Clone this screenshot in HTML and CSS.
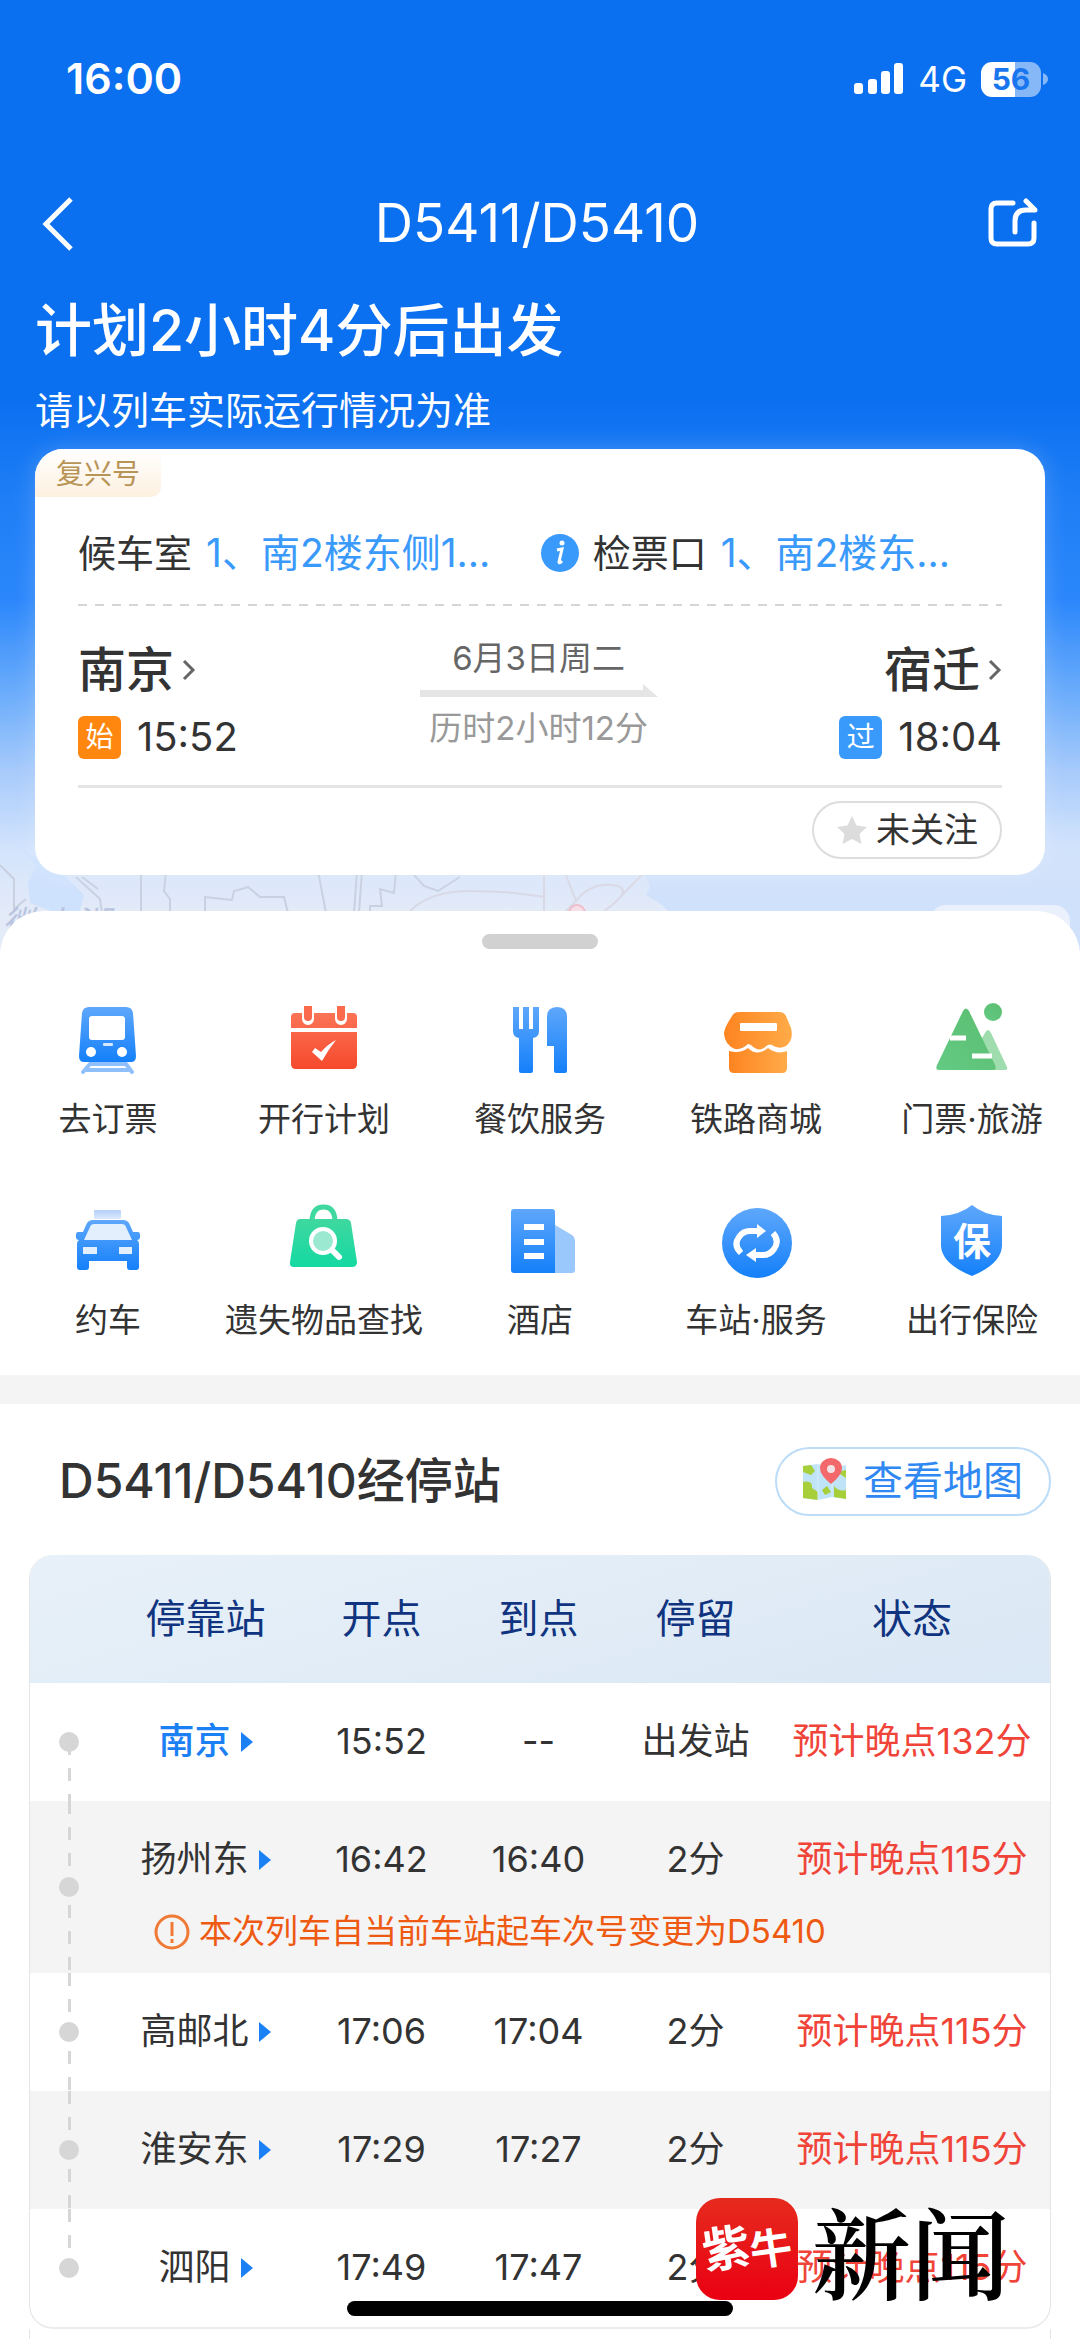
FILE: index.html
```html
<!DOCTYPE html>
<html lang="zh-CN">
<head>
    <meta charset="UTF-8">
    <meta name="viewport" content="width=device-width, initial-scale=1.0">
    <title>D5411/D5410</title>
    <link rel="stylesheet" href="styles.css">
</head>
<body>
    <div class="hero">
        <!-- map under the card -->
        <svg class="map" viewBox="0 0 1080 140" preserveAspectRatio="none" aria-hidden="true">
            <defs>
                <linearGradient id="sea" x2="0" y2="1"><stop stop-color="#cfe1fb" stop-opacity="0"/><stop offset="0.6" stop-color="#cfe1fb"/></linearGradient>
            </defs>
            <path d="M0 10L36 55 28 72 30 92 52 100H80L84 84 60 60 30 44Z" fill="#cfe2fd"/>
            <path d="M620 0L650 76 646 84 662 94 672 104V140H1080V0Z" fill="url(#sea)"/>
            <path d="M0 54L14 68V98L26 88M76 66L100 88 102 102M82 66L98 78M141 60V102M166 60L164 80 170 88V102M205 102V86L232 89 234 80 248 76 260 86H284L288 102M318 60L326 102M357 60L354 102M362 60L359 102M370 102V95H382L380 78 394 82 396 60M414 64L424 75 438 80 460 66" fill="none" stroke="#c9d0e0" stroke-width="2"/>
            <path d="M410 100Q430 80 470 80T545 86M544 60V102M566 64L576 90 562 104M576 90Q590 72 612 74T612 94L602 102M620 86L642 64" fill="none" stroke="#d9d9e6" stroke-width="2"/>
            <circle cx="577" cy="102" r="8" fill="#f6dfe8" stroke="#eebccb" stroke-width="2"/>
            <text x="2" y="126" class="maplabel">微山湖</text>
            <rect x="930" y="94" width="140" height="60" rx="16" fill="#eaf0fc"/>
        </svg>

        <div class="statusbar">
            <span class="clock">16:00</span>
            <div class="signals">
                <svg width="50" height="32" viewBox="0 0 50 32" fill="#fff"><rect y="20" width="9" height="11" rx="3"/><rect x="14" y="16" width="9" height="15" rx="3"/><rect x="27" y="8" width="9" height="23" rx="3"/><rect x="40" width="9" height="31" rx="3"/></svg>
                <span class="network">4G</span>
                <span class="battery">56</span>
                <svg class="tip" width="5" height="12" viewBox="0 0 5 12"><path d="M0 0Q5 2 5 6T0 12Z" fill="#86b8f8"/></svg>
            </div>
        </div>

        <div class="navbar">
            <button class="navbtn" aria-label="返回">
                <svg width="52" height="56" viewBox="0 0 52 56" fill="none" stroke="#fff" stroke-width="5"><path d="M36 3L11 28 36 53"/></svg>
            </button>
            <h1 class="navtitle">D5411/D5410</h1>
            <button class="navbtn" aria-label="分享">
                <svg width="52" height="52" viewBox="0 0 52 52" fill="none" stroke="#fff" stroke-width="5" stroke-linecap="round" stroke-linejoin="round"><path d="M26 5H10Q4 5 4 11V40Q4 46 10 46H41Q47 46 47 40V25"/><path d="M28 34V23Q28 12 39 12H48L39 3"/></svg>
            </button>
        </div>

        <div class="headline">计划2小时4分后出发</div>
        <div class="subline">请以列车实际运行情况为准</div>

        <div class="card">
            <span class="tag">复兴号</span>
            <div class="gates">
                <div class="gate">候车室 <span class="link">1、南2楼东侧1...</span></div>
                <div class="gate">
                    <svg width="38" height="38" viewBox="0 0 38 38"><circle cx="19" cy="19" r="19" fill="#3a9afc"/><path d="M16 16L21 15 18 28Q18 30 21 27" fill="none" stroke="#fff" stroke-width="3"/><circle cx="21" cy="9" r="2.5" fill="#fff"/></svg>
                    检票口 <span class="link">1、南2楼东...</span>
                </div>
            </div>
            <div class="dashes"></div>
            <div class="journey">
                <div class="end">
                    <div class="station">南京<svg width="14" height="22" viewBox="0 0 14 22"><path d="M2 2L11 11 2 20"/></svg></div>
                    <div class="time"><span class="badge">始</span>15:52</div>
                </div>
                <div class="middle">
                    <div class="date">6月3日周二</div>
                    <svg class="arrow" width="238" height="14" viewBox="0 0 238 14"><path d="M0 6H223V0L238 13H0Z" fill="#e5e5e5"/></svg>
                    <div class="duration">历时2小时12分</div>
                </div>
                <div class="end">
                    <div class="station">宿迁<svg width="14" height="22" viewBox="0 0 14 22"><path d="M2 2L11 11 2 20"/></svg></div>
                    <div class="time"><span class="badge pass">过</span>18:04</div>
                </div>
            </div>
            <div class="cardfoot">
                <button class="follow">
                    <svg width="32" height="30" viewBox="0 0 32 30"><path d="M16 1L20.500 10.500 31 12 23.500 19 25.500 29 16 24 6.500 29 8.500 19 1 12 11.500 10.500Z" fill="#dcdcdc"/></svg>
                    未关注
                </button>
            </div>
        </div>
    </div>

    <div class="sheet">
        <div class="handle"></div>
        <!-- gradients shared by the service icons -->
        <svg class="defs" width="0" height="0" aria-hidden="true">
            <defs>
                <linearGradient id="blue" x2="0" y2="1"><stop stop-color="#5ea7fb"/><stop offset="1" stop-color="#1480fa"/></linearGradient>
                <linearGradient id="pale" x2="0" y2="1"><stop stop-color="#b4cff8"/><stop offset="1" stop-color="#dbe9fd"/></linearGradient>
                <linearGradient id="red" x2="0" y2="1"><stop stop-color="#fb7455"/><stop offset="1" stop-color="#f6492d"/></linearGradient>
                <linearGradient id="orange"><stop stop-color="#fd8420"/><stop offset="1" stop-color="#ffab49"/></linearGradient>
                <linearGradient id="green" x1="1" x2="0" y2="1"><stop stop-color="#5bbd70"/><stop offset="1" stop-color="#63cb83"/></linearGradient>
                <linearGradient id="mint" x2="0" y2="1"><stop stop-color="#3fd89f"/><stop offset="1" stop-color="#14d9a2"/></linearGradient>
            </defs>
        </svg>
        <nav class="services">
            <a class="service" href="#">
                <svg viewBox="0 0 72 72"><path d="M18 61H54L60 69M18 61L11 69M14 67H57" fill="none" stroke="#8fc0fb" stroke-width="4" stroke-linecap="round"/><path d="M17 4H54Q60 4 61 10L64 53Q64 59 59 59H12Q7 59 7 53L10 10Q11 4 17 4Z" fill="url(#blue)"/><rect x="17" y="13" width="36" height="24" rx="3" fill="#fff"/><rect x="31" y="40" width="10" height="3" rx="1" fill="#d5e7fe"/><circle cx="19" cy="49" r="5" fill="#fff"/><circle cx="50" cy="49" r="5" fill="#fff"/></svg>
                去订票
            </a>
            <a class="service" href="#">
                <svg viewBox="0 0 72 72"><path d="M7 10H65Q69 10 69 14V25H3V14Q3 10 7 10ZM3 29H69V61Q69 66 64 66H8Q3 66 3 61Z" fill="url(#red)"/><path d="M20 3V16M53 3V16" stroke="#fff" stroke-width="12" stroke-linecap="round"/><path d="M16 3H24V14Q24 18 20 18T16 14ZM49 3H57V14Q57 18 53 18T49 14Z" fill="#fb6a4c"/><path d="M24 49L27 45 33 49Q40 41 48 37Q40 47 34 58Z" fill="#fff"/></svg>
                开行计划
            </a>
            <a class="service" href="#">
                <svg viewBox="0 0 72 72"><path d="M9 4H15V26H19V4H25V26H29V4H35V28Q35 34 29 35V68Q29 70 27 70H17Q15 70 15 68V35Q9 34 9 28ZM43 43V14Q43 4 53 4T63 14V68Q63 70 61 70H52Q50 70 50 68V43Z" fill="url(#blue)"/></svg>
                餐饮服务
            </a>
            <a class="service" href="#">
                <svg viewBox="0 0 72 72"><path d="M19 9H59Q64 9 66 13L71 25Q74 37 66 43Q59 47 52 42Q48 40 44 45Q38 49 31 42L28 41Q22 47 15 46Q5 42 4 31Q4 25 12 13Q14 9 19 9Z" fill="url(#orange)"/><path d="M9 48Q20 51 28 45Q37 54 48 45Q57 52 67 48V65Q67 70 62 70H14Q9 70 9 65Z" fill="url(#orange)"/><rect x="20" y="20" width="37" height="8" rx="1" fill="#fff"/></svg>
                铁路商城
            </a>
            <a class="service" href="#">
                <svg viewBox="0 0 72 72"><path d="M49 30Q52 24 55 30L71 64Q72 67 69 67H50L40 45Z" fill="#9fdcae"/><path d="M27 8Q30 3 33 8L59 62Q61 67 57 67H3Q-1 67 1 62Z" fill="url(#green)"/><circle cx="57" cy="9" r="9" fill="url(#green)"/><path d="M14 35H30M36 53H56" stroke="#fff" stroke-width="5"/></svg>
                门票·旅游
            </a>
            <a class="service" href="#">
                <svg viewBox="0 0 72 72"><rect x="22" y="6" width="27" height="9" rx="1" fill="url(#pale)"/><path d="M21 16H51Q56 16 58 21L61 28H66Q68 28 68 31V33Q68 36 65 36Q67 37 67 40V63Q67 66 64 66H58Q55 66 55 63V57H17V63Q17 66 14 66H8Q5 66 5 63V40Q5 37 7 36Q4 36 4 33V31Q4 28 6 28H11L14 21Q16 16 21 16Z" fill="url(#blue)"/><path d="M22 20H50Q53 20 54 23L60 36H12L18 23Q19 20 22 20ZM11 43H25V50H11ZM47 43H60V50H47Z" fill="#e3effd"/></svg>
                约车
            </a>
            <a class="service" href="#">
                <svg viewBox="0 0 72 72"><path d="M24 18Q24 3 35.500 3T47 18" fill="none" stroke="#3fd89f" stroke-width="5"/><path d="M12 15H58Q62 15 63 19L69 58Q69 63 64 63H6Q1 63 2 58L8 19Q9 15 12 15Z" fill="url(#mint)"/><circle cx="35" cy="37" r="12" fill="#9be9d1" stroke="#fff" stroke-width="4"/><path d="M45 47L51 53" stroke="#fff" stroke-width="6" stroke-linecap="round"/></svg>
                遗失物品查找
            </a>
            <a class="service" href="#">
                <svg viewBox="0 0 72 72"><path d="M51 21L68 31Q71 33 71 36V66Q71 69 68 69H51Z" fill="#9bc8fc"/><path d="M10 5H48Q51 5 51 8V69H10Q7 69 7 66V8Q7 5 10 5Z" fill="url(#blue)"/><path d="M20 23H40M20 38H40M20 52H40" stroke="#fff" stroke-width="6"/></svg>
                酒店
            </a>
            <a class="service" href="#">
                <svg viewBox="0 0 72 72"><circle cx="37" cy="39" r="35" fill="url(#blue)"/><path d="M21 49Q13 41 19 33Q23 27 30 27H38M53 29Q60 37 54 45Q50 51 43 51H34" fill="none" stroke="#fff" stroke-width="6"/><path d="M37 20L46 27 37 34ZM36 44L26 51 36 58Z" fill="#fff"/></svg>
                车站·服务
            </a>
            <a class="service" href="#">
                <svg viewBox="0 0 72 72"><path d="M36 1Q48 11 66 12V42Q65 60 36 72Q6 60 5 42V12Q24 11 36 1Z" fill="url(#blue)"/><text x="36" y="51" class="shieldtext">保</text></svg>
                出行保险
            </a>
        </nav>
    </div>

    <div class="stops">
        <div class="stopshead">
            <h2 class="stopstitle">D5411/D5410经停站</h2>
            <button class="mapbtn">
                <svg width="44" height="46" viewBox="0 0 44 46"><path d="M0 8L15 6 29 10 43 7V41L29 39 15 42 0 40Z" fill="#bfe3f7"/><path d="M0 8L8 7 12 13 8 17 0 14ZM0 24Q10 22 9 30L15 34V42L0 40ZM34 14L43 12V20ZM31 28Q36 34 43 32V41L31 39ZM19 32L24 28 28 34 22 37Z" fill="#a6cf3a"/><path d="M15 6V42M29 10V39" stroke="#d8eef9" stroke-width="1"/><path d="M28 26Q17 17 17 10A11 10 0 0 1 39 10Q39 17 28 26Z" fill="#f2686b"/><circle cx="28" cy="11" r="4" fill="#f3e3e6"/></svg>
                查看地图
            </button>
        </div>
        <div class="tablebox">
            <table class="stoptable">
                <colgroup><col class="ctrack"><col class="cname"><col class="ctime"><col class="ctime"><col class="ctime"><col></colgroup>
                <thead>
                    <tr><th></th><th>停靠站</th><th>开点</th><th>到点</th><th>停留</th><th>状态</th></tr>
                </thead>
                <tbody>
                    <tr>
                        <td class="track first"></td><td class="current"><a class="stop" href="#">南京</a></td><td>15:52</td><td>--</td><td>出发站</td><td class="late">预计晚点132分</td>
                    </tr>
                    <tr class="gray">
                        <td class="track" rowspan="2"></td><td><a class="stop" href="#">扬州东</a></td><td>16:42</td><td>16:40</td><td>2分</td><td class="late">预计晚点115分</td>
                    </tr>
                    <tr class="gray noterow">
                        <td colspan="5"><div class="note"><svg width="36" height="36" viewBox="0 0 36 36" fill="none" stroke="#f07a35" stroke-width="3"><circle cx="18" cy="18" r="16"/><path d="M18 8V22M18 25V29"/></svg>本次列车自当前车站起车次号变更为D5410</div></td>
                    </tr>
                    <tr>
                        <td class="track"></td><td><a class="stop" href="#">高邮北</a></td><td>17:06</td><td>17:04</td><td>2分</td><td class="late">预计晚点115分</td>
                    </tr>
                    <tr class="gray">
                        <td class="track"></td><td><a class="stop" href="#">淮安东</a></td><td>17:29</td><td>17:27</td><td>2分</td><td class="late">预计晚点115分</td>
                    </tr>
                    <tr>
                        <td class="track last"></td><td><a class="stop" href="#">泗阳</a></td><td>17:49</td><td>17:47</td><td>2分</td><td class="late">预计晚点115分</td>
                    </tr>
                </tbody>
            </table>
        </div>
        <div class="tablenext"></div>
    </div>

    <div class="homebar"></div>
    <div class="watermark">
        <div class="logo"><span class="zi">紫</span><span class="niu">牛</span></div>
        <span class="brand">新闻</span>
    </div>
</body>
</html>
```
FILE: styles.css
```css
* {
    box-sizing: border-box;
}
html {
    height: 100%;
    overflow: hidden;
}
body {
    margin: 0;
    position: relative;
    height: 100%;
    overflow: hidden;
    background-color: #fff;
    color: #333;
    font-family: Inter, "Noto Sans CJK SC", sans-serif;
    font-size: 36px;
    line-height: 1.2;
}
button {
    font: inherit;
    color: inherit;
    background: none;
    border: none;
    padding: 0;
}
a {
    color: inherit;
    text-decoration: none;
}
svg {
    flex: none;
    overflow: visible;
}

.hero {
    position: relative;
    padding: 0 35px 76px;
    color: #fff;
    background: linear-gradient(#0b70f0 0, #0b70f0 400px, #1f7ef6 500px, #2b87fb 600px, #69abfb 690px, #a6cafb 770px, #d3e4fc 850px, #e3eaf8 910px);
}
.map {
    position: absolute;
    left: 0;
    bottom: 0;
    width: 100%;
    height: 140px;
}
.maplabel {
    font-size: 36px;
    font-style: italic;
    fill: #b9c4e0;
}
.statusbar {
    position: relative;
    display: flex;
    justify-content: space-between;
    align-items: center;
    height: 158px;
    padding-left: 31px;
    margin-right: -3px;
}
.clock {
    font-size: 43px;
    font-weight: 600;
}
.signals {
    display: flex;
    align-items: center;
}
.network {
    font-size: 35px;
    margin: 0 14px;
}
.battery {
    width: 60px;
    height: 35px;
    border-radius: 11px;
    background: linear-gradient(90deg, #fff 56%, #86b8f8 56%);
    color: #1a76ee;
    font-size: 30px;
    font-weight: 700;
    line-height: 35px;
    text-align: center;
}
.tip {
    margin-left: 2px;
}
.navbar {
    position: relative;
    display: flex;
    justify-content: space-between;
    align-items: center;
    height: 132px;
    padding-right: 6px;
}
.navbtn {
    display: flex;
}
.navtitle {
    margin: 0;
    font-size: 53px;
    font-weight: 400;
}
.headline {
    position: relative;
    font-size: 57px;
    font-weight: 500;
    line-height: 82px;
}
.subline {
    position: relative;
    font-size: 38px;
    line-height: 77px;
}

.card {
    position: relative;
    padding: 0 43px 16px;
    border-radius: 28px;
    background-color: #fff;
    color: #333;
    box-shadow: 0 0 24px rgba(255, 255, 255, 0.2);
}
.tag {
    display: block;
    width: 126px;
    height: 48px;
    margin-left: -43px;
    padding-left: 21px;
    border-radius: 28px 0 10px 0;
    background: linear-gradient(#fff, #fdf0e0);
    color: #b89457;
    font-size: 28px;
    line-height: 50px;
}
.gates {
    display: flex;
    justify-content: space-between;
    margin-top: 28px;
    padding-right: 52px;
    font-size: 38px;
    line-height: 56px;
}
.gate {
    display: flex;
    align-items: center;
    gap: 14px;
    white-space: nowrap;
}
.link {
    color: #3a9afc;
    font-size: 39px;
}
.dashes {
    height: 2px;
    margin-top: 23px;
    background: repeating-linear-gradient(90deg, #d5d5d5 0, #d5d5d5 9px, #fff 9px, #fff 17px);
}
.journey {
    display: flex;
    justify-content: space-between;
    padding: 34px 0 11px;
    border-bottom: 3px solid #e5e5e5;
}
.station {
    display: flex;
    align-items: center;
    justify-content: space-between;
    width: 118px;
    font-size: 48px;
    font-weight: 500;
    line-height: 60px;
}
.station svg {
    fill: none;
    stroke: #666;
    stroke-width: 3;
}
.end:last-child .station {
    margin-left: auto;
}
.time {
    display: flex;
    align-items: center;
    gap: 16px;
    height: 74px;
    font-size: 40px;
}
.badge {
    width: 43px;
    height: 43px;
    border-radius: 6px;
    background-color: #ff870f;
    color: #fff;
    font-size: 28px;
    line-height: 43px;
    text-align: center;
}
.pass {
    background-color: #3a9afc;
}
.middle {
    margin-top: -4px;
    color: #999;
    font-size: 33px;
    line-height: 44px;
    text-align: center;
}
.date {
    color: #666;
}
.arrow {
    display: block;
    margin: 4px 0 8px;
}
.cardfoot {
    display: flex;
    justify-content: flex-end;
    padding-top: 13px;
}
.follow {
    display: flex;
    align-items: center;
    justify-content: center;
    gap: 8px;
    width: 190px;
    height: 58px;
    border: 2px solid #ddd;
    border-radius: 29px;
    font-size: 34px;
}

.sheet {
    position: relative;
    margin-top: -40px;
    padding: 23px 0 33px;
    border-radius: 44px 44px 0 0;
    background-color: #fff;
}
.defs {
    position: absolute;
}
.handle {
    width: 116px;
    height: 15px;
    margin: 0 auto 54px;
    border-radius: 8px;
    background-color: #d1d1d1;
}
.services {
    display: grid;
    grid-template-columns: repeat(5, 1fr);
    row-gap: 63px;
}
.service {
    display: flex;
    flex-direction: column;
    align-items: center;
    gap: 22px;
    font-size: 33px;
    line-height: 44px;
    white-space: nowrap;
}
.service svg {
    width: 72px;
    height: 72px;
}
.shieldtext {
    fill: #fff;
    font-size: 38px;
    font-weight: 700;
    text-anchor: middle;
}

.stops {
    padding: 0 29px;
    border-top: 29px solid #f4f4f4;
}
.stopshead {
    display: flex;
    justify-content: space-between;
    align-items: center;
    height: 151px;
    padding: 3px 0 0 30px;
}
.stopstitle {
    margin: 0;
    font-size: 48px;
    font-weight: 500;
}
.mapbtn {
    display: flex;
    align-items: center;
    justify-content: center;
    gap: 16px;
    width: 276px;
    height: 69px;
    border: 2px solid #bcdcf8;
    border-radius: 35px;
    color: #3089f2;
    font-size: 40px;
}
.tablebox {
    border: 1px solid #e5e5e5;
    border-top: none;
    border-bottom: 2px solid #ececec;
    border-radius: 24px;
    overflow: hidden;
}
.stoptable {
    width: 100%;
    table-layout: fixed;
    border-collapse: collapse;
}
.ctrack {
    width: 78px;
}
.cname {
    width: 195px;
}
.ctime {
    width: 157px;
}
thead {
    background: linear-gradient(165deg, #e8f1f9, #dae7f4);
    color: #10347f;
}
th {
    height: 128px;
    padding: 0;
    font-size: 40px;
    font-weight: 400;
}
td {
    height: 118px;
    padding: 0;
    text-align: center;
    white-space: nowrap;
}
.gray {
    background-color: #f4f4f4;
}
.noterow td {
    height: 54px;
    vertical-align: top;
}
.note {
    display: flex;
    align-items: center;
    gap: 9px;
    height: 26px;
    padding-left: 46px;
    color: #ef5a12;
    font-size: 33px;
}
/* the dashed line and dot beside every stop */
.track {
    position: relative;
    background: repeating-linear-gradient(#d6d6d6 0, #d6d6d6 13px, transparent 13px, transparent 26px) no-repeat 38px 0 / 3px 100%;
}
.track::after {
    content: "";
    position: absolute;
    left: 29px;
    top: 50%;
    width: 20px;
    height: 20px;
    margin-top: -10px;
    border-radius: 50%;
    background-color: #d6d6d6;
}
.first {
    background-position: 38px 100%;
    background-size: 3px 50%;
}
.last {
    background-size: 3px 50%;
}
.stop {
    display: inline-flex;
    align-items: center;
    gap: 10px;
}
.stop::after {
    content: "";
    border: solid transparent;
    border-width: 10px 0 10px 12px;
    border-left-color: #1c80f5;
}
.current {
    color: #1c80f5;
    font-weight: 500;
}
.late {
    color: #f04438;
}
.tablenext {
    height: 118px;
    border: 1px solid #e5e5e5;
    border-top: none;
}

.homebar {
    position: absolute;
    left: 50%;
    bottom: 23px;
    width: 386px;
    height: 15px;
    margin-left: -193px;
    border-radius: 8px;
    background-color: #000;
}
.watermark {
    position: absolute;
    right: 70px;
    bottom: 39px;
    display: flex;
    align-items: center;
    gap: 14px;
}
.logo {
    display: flex;
    align-items: center;
    justify-content: center;
    width: 102px;
    height: 102px;
    border-radius: 24px;
    background: linear-gradient(#e62a1e, #ea0012);
    color: #fff;
    font-weight: 700;
}
.zi {
    font-size: 48px;
    transform: rotate(-8deg);
}
.niu {
    font-size: 42px;
    transform: rotate(-8deg);
}
.brand {
    color: #000;
    font-family: "Noto Serif CJK SC", "Noto Sans CJK SC", serif;
    font-size: 99px;
    font-weight: 600;
    line-height: 102px;
}
```
